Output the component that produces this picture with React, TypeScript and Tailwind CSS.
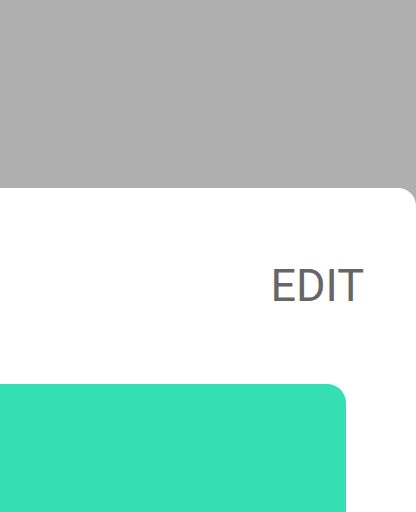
import React from 'react';

const App: React.FC = () => {
  return (
    <div className="w-[416px] h-[512px] overflow-hidden bg-[#afafaf] flex flex-col" style={{ fontFamily: 'Roboto, sans-serif' }}>
      <div className="h-[188px] shrink-0" />
      <div className="flex-1 bg-white rounded-tr-[18px] flex flex-col">
        <div className="h-[196px] flex justify-end pt-[72px] pr-[52px]">
          <span className="text-[45px] leading-[52px] text-[#666666]">EDIT</span>
        </div>
        <div className="flex-1 w-[346px] bg-[#34dfb1] rounded-tr-[19px]" />
      </div>
    </div>
  );
};

export default App;
